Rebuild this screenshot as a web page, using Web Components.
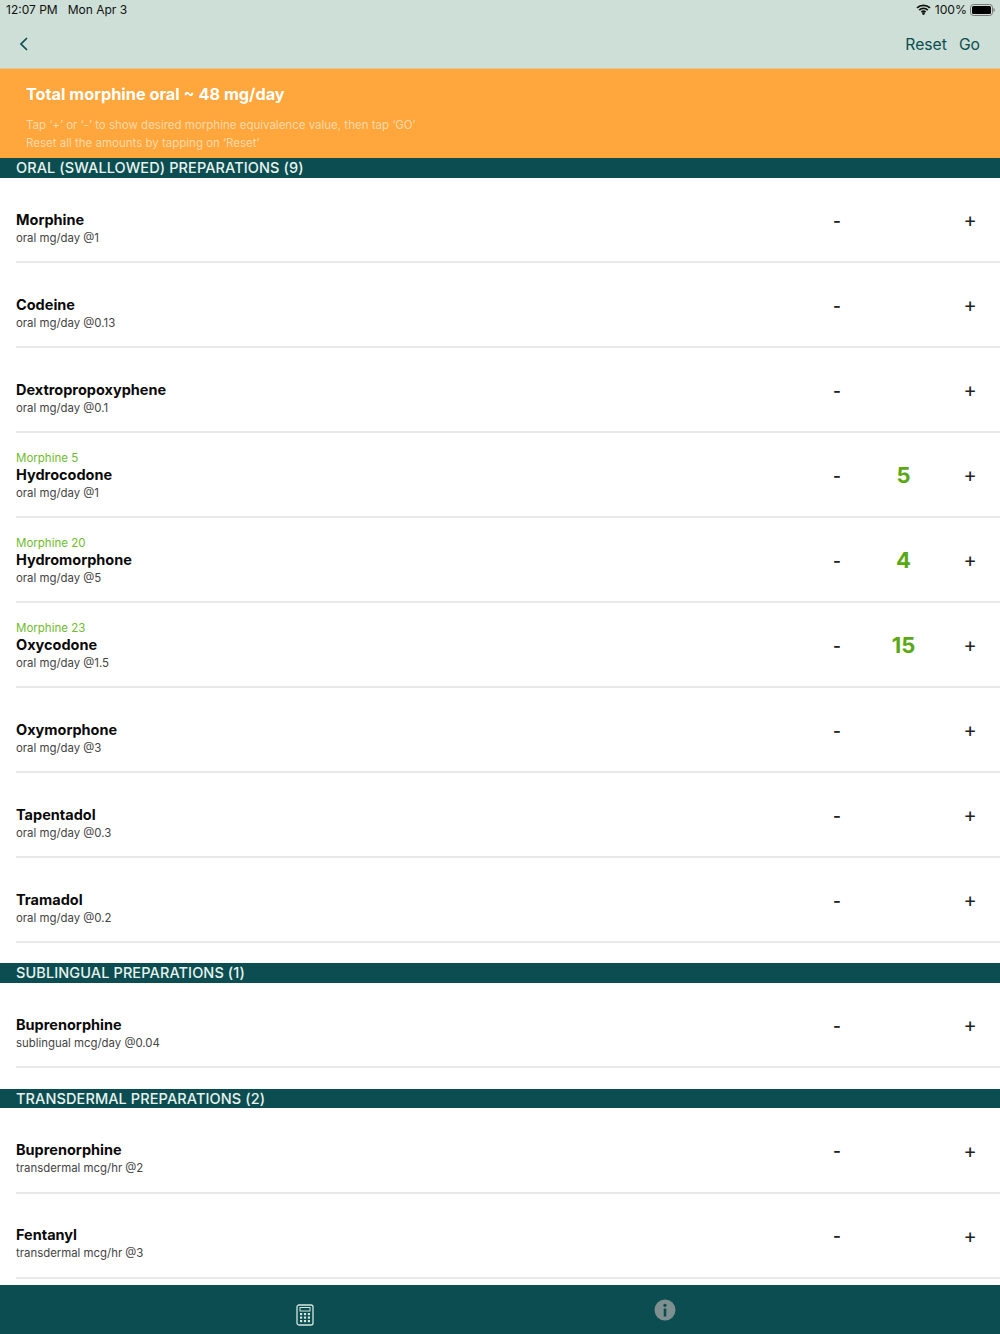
<!DOCTYPE html>
<html><head><meta charset="utf-8"><style>
html,body{margin:0;padding:0;background:#fff;font-family:Inter,"Liberation Sans",sans-serif}
body{width:1000px;height:1334px;overflow:hidden;display:flex;flex-direction:column}
</style></head><body>
<app-top></app-top>
<total-banner></total-banner>
<drug-section title="ORAL (SWALLOWED) PREPARATIONS (9)">
<drug-row name="Morphine" sub="oral mg/day @1"></drug-row>
<drug-row name="Codeine" sub="oral mg/day @0.13"></drug-row>
<drug-row name="Dextropropoxyphene" sub="oral mg/day @0.1"></drug-row>
<drug-row name="Hydrocodone" sub="oral mg/day @1" eq="Morphine 5" val="5"></drug-row>
<drug-row name="Hydromorphone" sub="oral mg/day @5" eq="Morphine 20" val="4"></drug-row>
<drug-row name="Oxycodone" sub="oral mg/day @1.5" eq="Morphine 23" val="15"></drug-row>
<drug-row name="Oxymorphone" sub="oral mg/day @3"></drug-row>
<drug-row name="Tapentadol" sub="oral mg/day @0.3"></drug-row>
<drug-row name="Tramadol" sub="oral mg/day @0.2"></drug-row>
</drug-section>
<drug-section title="SUBLINGUAL PREPARATIONS (1)">
<drug-row name="Buprenorphine" sub="sublingual mcg/day @0.04"></drug-row>
</drug-section>
<drug-section title="TRANSDERMAL PREPARATIONS (2)" last>
<drug-row name="Buprenorphine" sub="transdermal mcg/hr @2"></drug-row>
<drug-row name="Fentanyl" sub="transdermal mcg/hr @3"></drug-row>
</drug-section>
<tab-bar></tab-bar>
<script>
function def(name,html){customElements.define(name,class extends HTMLElement{connectedCallback(){if(this.shadowRoot)return;const r=this.attachShadow({mode:'open'});r.innerHTML=typeof html==='function'?html(this):html;}})}
def('app-top',`<style>
:host{display:block;height:69px;background:#cddfd6;box-sizing:border-box;border-bottom:1px solid #d8c9a0;flex:none;font-family:Inter,"Liberation Sans",sans-serif}
.status{height:20px;box-sizing:border-box;padding:0 5px 1px 6px;display:flex;align-items:center;font-size:12px;color:#111}
.status span+span{margin-left:10px}
.right{margin-left:auto;display:flex;align-items:center;gap:4px}
.right span{font-size:12.200px}
.right svg:last-child{margin-left:-1px}
.nav{height:48px;display:flex;align-items:center;padding:0 20px 0 18px;color:#0b4d50;font-size:15.700px}
.nav .links{margin-left:auto;display:flex;gap:12px}
svg{display:block}
</style>
<div class="status"><span>12:07 PM</span><span>Mon Apr 3</span><div class="right">
<svg width="15" height="11" viewBox="0 0 15 11"><path d="M1 3.900C4.600.6 10.400.6 14 3.900M3.200 6.100c2.400-2.200 6.200-2.200 8.600 0M5.400 8.200c1.200-1.100 3-1.100 4.200 0" fill="none" stroke="#111" stroke-width="1.800"/><circle cx="7.500" cy="9.600" r="1.300" fill="#111"/></svg>
<span style="margin-left:0">100%</span>
<svg width="25" height="12" viewBox="0 0 25 12"><rect x=".5" y=".5" width="22" height="11" rx="3" fill="none" stroke="#777"/><rect x="2" y="2" width="19" height="8" rx="1.500" fill="#000"/><path d="M23.500 4v4c.8-.3 1.300-1 1.300-2s-.5-1.700-1.300-2z" fill="#777"/></svg>
</div></div>
<div class="nav"><svg width="12" height="16" viewBox="0 0 12 16"><path d="M9 2L3 8l6 6" fill="none" stroke="#0b4d50" stroke-width="1.700"/></svg><div class="links"><span>Reset</span><span>Go</span></div></div>`);
def('total-banner',`<style>
:host{display:block;height:89px;background:#ffa63c;box-sizing:border-box;padding:14px 26px 0;color:#fff;flex:none;font-family:Inter,"Liberation Sans",sans-serif}
h1{margin:0;font-size:16.300px;font-weight:700;line-height:22px}
p{margin:11px 0 0;font-size:11.500px;line-height:18px;color:#ffd9a8}
</style><h1>Total morphine oral ~ 48 mg/day</h1><p>Tap ‘+’ or ‘-’ to show desired morphine equivalence value, then tap ‘GO’<br>Reset all the amounts by tapping on ‘Reset’</p>`);
def('drug-section',el=>`<style>
:host{display:block;flex:none;font-family:Inter,"Liberation Sans",sans-serif;padding-bottom:20.400px}
:host([last]){padding-bottom:0}
.h{height:19.500px;margin-bottom:.5px;background:#0b4d50;color:#e8f2ee;font-size:14.500px;font-weight:500;line-height:20px;padding-left:16px;letter-spacing:.1px}
</style><div class="h">${el.getAttribute('title')}</div><slot></slot>`);
def('drug-row',el=>{const g=a=>el.getAttribute(a);return `<style>
:host{display:block;height:85px;padding-left:16px;font-family:Inter,"Liberation Sans",sans-serif}
.in{height:85px;box-sizing:border-box;border-bottom:2px solid #e9e9e9;display:flex;align-items:center}
.txt{flex:1;display:flex;flex-direction:column;padding-top:2px}
.eq{font-size:11.500px;height:15px;line-height:15px;color:#6fbb2e;margin-bottom:-1px}
.n{font-size:14.500px;font-weight:700;color:#0a0a0a;line-height:20px}
.s{font-size:11.400px;line-height:15px;color:#444;margin-top:1px}
.st{display:grid;grid-template-columns:16px 117px 16px;align-items:center;justify-items:center;margin-right:22px;width:149px;padding-top:1px}
.b{font-size:20px;color:#222;line-height:20px}
.m{font-weight:600;font-size:17px;margin-top:1px}
.v{font-size:22px;font-weight:700;color:#5aa813;line-height:24px}
</style><div class="in"><div class="txt"><div class="eq">${g('eq')||''}</div><div class="n">${g('name')}</div><div class="s">${g('sub')}</div></div>
<div class="st"><span class="b m">-</span><span class="v">${g('val')||''}</span><span class="b">+</span></div></div>`});
def('tab-bar',`<style>
:host{display:block;position:fixed;left:0;right:0;top:1285px;height:49px;background:#0b4d50}
.w{display:grid;grid-template-columns:1fr 1fr;height:49px}
.a,.b{display:flex;justify-content:center}
.a{padding:19px 0 0 110px}
.b{padding:14px 0 0 0;margin-left:-170px}
svg{display:block}
</style><div class="w"><div class="a"><svg width="18" height="22" viewBox="0 0 18 22"><rect x="1" y="1" width="16" height="20" rx="2" fill="none" stroke="#d5e6df" stroke-width="1.300"/><rect x="4" y="3.500" width="10" height="3.500" fill="none" stroke="#d5e6df"/><g fill="#d5e6df"><rect x="4" y="9" width="2.200" height="2.200"/><rect x="7.900" y="9" width="2.200" height="2.200"/><rect x="11.800" y="9" width="2.200" height="2.200"/><rect x="4" y="12.500" width="2.200" height="2.200"/><rect x="7.900" y="12.500" width="2.200" height="2.200"/><rect x="11.800" y="12.500" width="2.200" height="2.200"/><rect x="4" y="16" width="2.200" height="2.200"/><rect x="7.900" y="16" width="2.200" height="2.200"/><rect x="11.800" y="16" width="2.200" height="2.200"/></g></svg></div>
<div class="b"><svg width="22" height="22" viewBox="0 0 22 22"><circle cx="11" cy="11" r="10.500" fill="#7d8f8e"/><circle cx="11" cy="6.300" r="1.600" fill="#0b4d50"/><rect x="9.700" y="9.500" width="2.600" height="8" fill="#0b4d50"/></svg></div></div>`);
</script></body></html>
